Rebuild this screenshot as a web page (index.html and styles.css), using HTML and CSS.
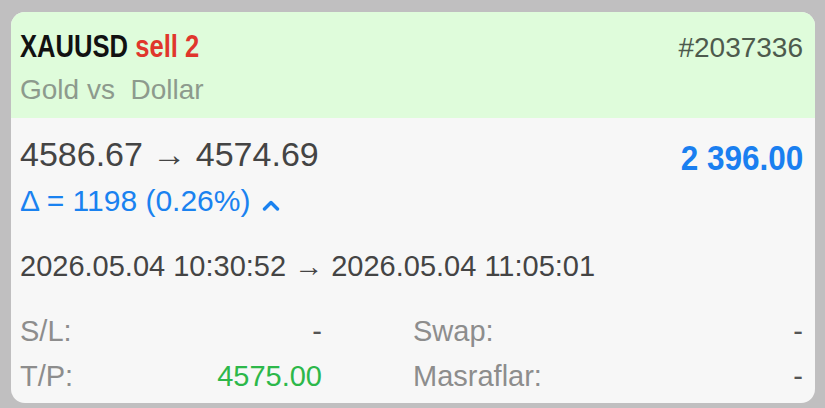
FILE: index.html
```html
<!DOCTYPE html>
<html>
<head>
  <title>XAUUSD sell 2</title>
  <link rel="stylesheet" href="styles.css">
</head>
<body>
  <div class="card">
    <div class="header">
      <div class="titleRow">
        <div class="title"><span class="symbol">XAUUSD</span> <span class="side">sell 2</span></div>
        <div class="ticket">#2037336</div>
      </div>
      <div class="desc">Gold vs&nbsp; Dollar</div>
    </div>

    <div class="body">
      <div class="priceRow">
        <div class="prices">4586.67 &rarr; 4574.69</div>
        <div class="profit">2 396.00</div>
      </div>
      <div class="delta">&Delta; = 1198 (0.26%)
        <svg class="chevron" width="18" height="12" viewBox="0 0 18 12">
          <path d="M2.5 10 L9 3.5 L15.5 10" fill="none" stroke="#1a82f0" stroke-width="3.4" stroke-linecap="round" stroke-linejoin="round"/>
        </svg>
      </div>
      <div class="times">2026.05.04 10:30:52 &rarr; 2026.05.04 11:05:01</div>

      <div class="details">
        <div class="item"><span class="label">S/L:</span><span class="value">-</span></div>
        <div class="item"><span class="label">Swap:</span><span class="value">-</span></div>
        <div class="item"><span class="label">T/P:</span><span class="value green">4575.00</span></div>
        <div class="item"><span class="label">Masraflar:</span><span class="value">-</span></div>
      </div>
    </div>
  </div>
</body>
</html>
```

FILE: styles.css
```css
body {
  margin: 0;
  padding: 12px 10px 0 11px;
  background-color: #c0bfc0;
  font-family: "Liberation Sans", Arial, sans-serif;
  height: 408px;
  box-sizing: border-box;
  overflow: hidden;
}

.card {
  width: 804px;
  height: 391px;
  border-radius: 14px;
  overflow: hidden;
  background-color: #f7f7f7;
}

.header {
  background-color: #dffcdb;
  height: 106px;
  box-sizing: border-box;
  padding: 14px 12px 0 9px;
}

.titleRow {
  display: flex;
  justify-content: space-between;
  align-items: baseline;
  height: 40px;
}

/* narrow bold face: no condensed font installed, so squeeze it */
.title {
  font-weight: bold;
  font-size: 32px;
  line-height: 40px;
  transform: scaleX(0.8);
  transform-origin: left center;
  white-space: nowrap;
}

.symbol {
  color: #111;
}

.side {
  color: #e0362c;
}

.ticket {
  font-size: 28px;
  color: #4d5a4d;
}

.desc {
  font-size: 28px;
  line-height: 40px;
  margin-top: 4px;
  color: #8d9a8d;
}

.body {
  padding: 14px 12px 0 9px;
}

.priceRow {
  display: flex;
  justify-content: space-between;
  align-items: baseline;
  height: 44px;
}

.prices {
  font-size: 34px;
  line-height: 44px;
  color: #444;
}

.profit {
  font-weight: bold;
  font-size: 35px;
  color: #1a7ff0;
  position: relative;
  top: 4px;
  transform: scaleX(0.9);
  transform-origin: right center;
  white-space: nowrap;
}

.delta {
  font-size: 30px;
  line-height: 44px;
  margin-top: 3px;
  color: #1a82f0;
}

.chevron {
  margin-left: 3px;
}

.times {
  font-size: 29px;
  line-height: 44px;
  margin-top: 21px;
  color: #444;
}

.details {
  display: grid;
  grid-template-columns: 302px 1fr;
  column-gap: 91px;
  margin-top: 21px;
}

.item {
  display: flex;
  justify-content: space-between;
  font-size: 29px;
  line-height: 45px;
}

.label {
  color: #8d8d8d;
}

.value {
  color: #555;
}

.green {
  color: #2db84a;
}
```
